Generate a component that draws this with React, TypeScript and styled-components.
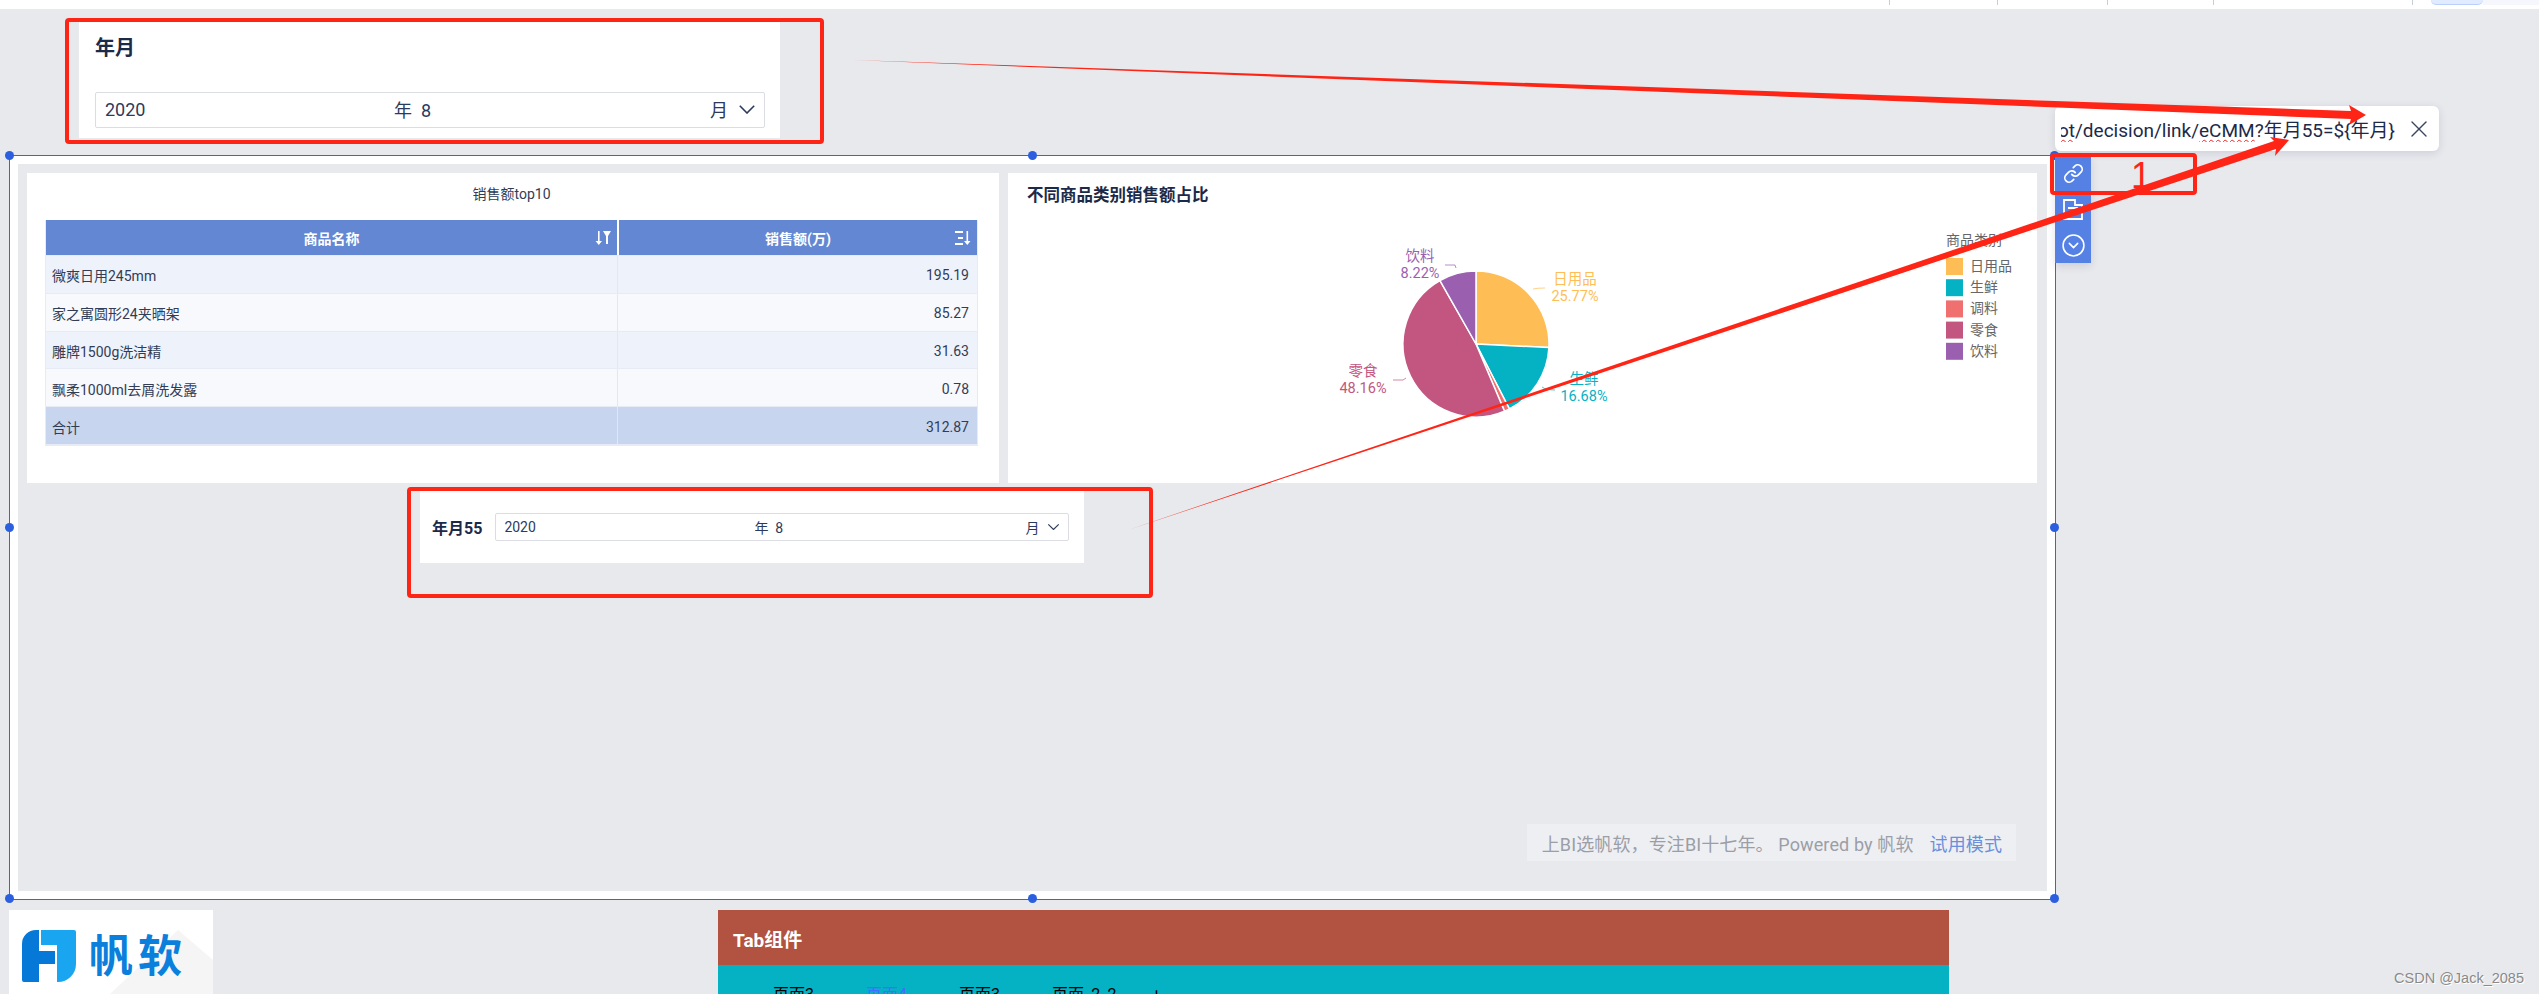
import React from 'react';
import styled, { createGlobalStyle } from 'styled-components';
import { Link, CircleChevronDown, X } from 'lucide-react';

const FONT = `Roboto, "Noto Sans CJK SC", sans-serif`;
const NAVY = '#1c2a4a';
const RED = '#ff2516';

const GlobalStyle = createGlobalStyle`
  html, body {
    margin: 0;
    padding: 0;
    background: #e8e9ed;
    font-family: ${FONT};
    overflow: hidden;
  }
  * {
    box-sizing: border-box;
  }
`;

const Page = styled.div`
  position: relative;
  width: 2539px;
  height: 994px;
  overflow: hidden;
  background: #e8e9ed;
`;

const TopBar = styled.div`
  display: flex;
  height: 9px;
  padding-left: 1889px;
  background: #fff;
`;

const Tick = styled.span<{ $w: number }>`
  width: ${p => p.$w}px;
  height: 5px;
  border-left: 1px solid #c9cdd6;
  flex: none;
`;

const TopPill = styled.span`
  width: 52px;
  height: 5px;
  margin-left: 18px;
  background: #e0ebff;
  border-bottom: 1px solid #b9d0fa;
  border-radius: 0 0 12px 12px;
`;

const TopTail = styled.span`
  flex: 1;
  height: 5px;
  background: #f5f7fd;
`;

const TopFilter = styled.div`
  width: 701px;
  height: 118px;
  margin: 11px 0 0 79px;
  padding: 13px 15px 0 16px;
  background: #fff;
`;

const FilterTitle = styled.div`
  font-size: 20px;
  font-weight: 700;
  line-height: 30px;
  color: ${NAVY};
  margin-bottom: 29px;
`;

const Select = styled.div<{ $small?: boolean }>`
  flex: 1;
  display: grid;
  grid-template-columns: ${p => (p.$small ? '250px 271px 1fr' : '289px 316px 1fr')};
  align-items: center;
  height: ${p => (p.$small ? 28 : 36)}px;
  padding: 0 8px ${p => (p.$small ? 0 : 2)}px ${p => (p.$small ? 8 : 9)}px;
  background: #fff;
  border: 1px solid #dcdde4;
  border-radius: 2px;
  font-size: ${p => (p.$small ? 14 : 18)}px;
  color: #2c3a5c;
`;

const SelectEnd = styled.span<{ $small?: boolean }>`
  display: flex;
  align-items: center;
  justify-content: flex-end;
  gap: ${p => (p.$small ? 8 : 10)}px;
`;

const Selection = styled.div`
  position: relative;
  width: 2047px;
  height: 745px;
  margin: 17px 0 0 9px;
  padding: 8px;
  background: #fff;
  border: 1px solid #3467dc;
`;

const Dot = styled.i<{ $x: number; $y: number }>`
  position: absolute;
  left: ${p => p.$x}%;
  top: ${p => p.$y}%;
  width: 9px;
  height: 9px;
  margin: -5px 0 0 -5px;
  border-radius: 50%;
  background: #2b5fe0;
`;

const Panel = styled.div`
  display: flex;
  flex-direction: column;
  height: 100%;
  padding: 9px;
  background: #e8e9ed;
`;

const Cards = styled.div`
  display: grid;
  grid-template-columns: 972px 1029px;
  gap: 9px;
  height: 310px;
`;

const Card = styled.section`
  background: #fff;
`;

const TableCard = styled(Card)`
  padding: 0 21px 0 18px;
`;

const TableTitle = styled.div`
  height: 47px;
  padding-top: 10px;
  font-size: 14px;
  line-height: 22px;
  text-align: center;
  color: #333c55;
`;

const TableGrid = styled.div`
  border: 1px solid #e6ebf5;
  border-top: none;
  font-size: 14px;
  color: #333c55;
`;

const Row = styled.div<{ $bg: string; $h: number }>`
  display: grid;
  grid-template-columns: 571px 1fr;
  height: ${p => p.$h}px;
  background: ${p => p.$bg};
  border-bottom: 1px solid #e6ebf5;
`;

const Cell = styled.div<{ $right?: boolean }>`
  display: flex;
  align-items: center;
  justify-content: ${p => (p.$right ? 'flex-end' : 'flex-start')};
  padding: 2px 8px 0 6px;
  border-left: ${p => (p.$right ? '1px solid #e2e8f3' : 'none')};
`;

const HeadCell = styled.div<{ $right?: boolean }>`
  position: relative;
  display: flex;
  align-items: center;
  justify-content: center;
  background: #6487d3;
  color: #fff;
  font-weight: 700;
  border-left: ${p => (p.$right ? '2px solid #fff' : 'none')};
`;

const HeadIcon = styled.svg`
  position: absolute;
  right: 6px;
  top: 11px;
`;

const ChartCard = styled(Card)`
  display: flex;
  flex-direction: column;
`;

const ChartTitle = styled.div`
  height: 44px;
  padding: 12px 0 0 19px;
  font-size: 16.5px;
  font-weight: 700;
  line-height: 22px;
  color: ${NAVY};
`;

const ChartSvg = styled.svg`
  display: block;
  font-family: ${FONT};
`;

const InlineFilter = styled.div`
  display: flex;
  align-items: center;
  gap: 13px;
  width: 664px;
  height: 73px;
  margin: 7px 0 0 393px;
  padding: 0 15px 0 12px;
  background: #fff;
`;

const InlineLabel = styled.span`
  flex: none;
  font-size: 16px;
  font-weight: 700;
  color: ${NAVY};
  white-space: nowrap;
`;

const Notice = styled.div`
  display: flex;
  align-items: center;
  gap: 16px;
  align-self: flex-end;
  height: 37px;
  margin: auto 22px 21px 0;
  padding: 0 14px 0 15px;
  background: #eeeff3;
  font-size: 18px;
  letter-spacing: 0.12px;
  color: #9b9ea6;
  white-space: nowrap;
`;

const NoticeLink = styled.span`
  color: #6a8fdc;
`;

const Bottom = styled.div`
  display: flex;
  margin: 10px 0 0 9px;
  height: 84px;
`;

const LogoCard = styled.div`
  position: relative;
  display: flex;
  align-items: flex-start;
  gap: 13px;
  width: 204px;
  padding: 20px 0 0 13px;
  overflow: hidden;
  background: #fff;
`;

const LogoBack = styled.svg`
  position: absolute;
  left: 0;
  top: 0;
`;

const LogoIcon = styled.svg`
  position: relative;
  flex: none;
`;

const LogoText = styled.span`
  position: relative;
  margin-top: -3px;
  font-size: 44px;
  font-weight: 700;
  line-height: 60px;
  letter-spacing: 5px;
  color: #0a7fdc;
`;

const TabWidget = styled.div`
  width: 1231px;
  margin-left: 505px;
`;

const TabHead = styled.div`
  height: 55px;
  padding: 17px 0 0 15px;
  background: #b25240;
  color: #fff;
  font-size: 19px;
  font-weight: 700;
  line-height: 28px;
`;

const TabRow = styled.div`
  display: flex;
  height: 60px;
  padding: 18px 0 0 55px;
  background: #05b2c4;
  font-size: 16px;
  line-height: 24px;
`;

const TabItem = styled.span<{ $active?: boolean; $wide?: boolean }>`
  width: ${p => (p.$wide ? 100 : 93)}px;
  color: ${p => (p.$active ? '#3f6fff' : '#000')};
`;

const Popup = styled.div`
  position: absolute;
  left: 2055px;
  top: 106px;
  display: flex;
  align-items: center;
  width: 384px;
  height: 45px;
  padding: 0 6px;
  background: #fff;
  border-radius: 6px;
  box-shadow: 0 2px 8px rgba(40, 50, 80, 0.14);
  font-size: 19px;
  color: ${NAVY};
`;

const PopupText = styled.div`
  display: flex;
  justify-content: flex-end;
  flex: none;
  width: 334px;
  margin-right: 10px;
  overflow: hidden;
  white-space: nowrap;
`;

const Squiggle = styled.span`
  text-decoration: underline wavy #e8262a 1px;
  text-underline-offset: 2px;
`;

const Toolbar = styled.div`
  position: absolute;
  left: 2055px;
  top: 156px;
  display: flex;
  flex-direction: column;
  width: 36px;
  background: #5681e4;
  box-shadow: 0 3px 8px rgba(40, 50, 80, 0.14);
  color: #fff;
`;

const ToolButton = styled.div`
  display: flex;
  align-items: center;
  justify-content: center;
  height: 35.7px;
`;

const Mark = styled.div<{ $x: number; $y: number; $w: number; $h: number }>`
  position: absolute;
  left: ${p => p.$x}px;
  top: ${p => p.$y}px;
  width: ${p => p.$w}px;
  height: ${p => p.$h}px;
  border: 4px solid ${RED};
  border-radius: 4px;
`;

const MarkNumber = styled.div`
  position: absolute;
  left: 2131px;
  top: 155px;
  font-family: "Liberation Sans", sans-serif;
  font-size: 36px;
  line-height: 42px;
  color: ${RED};
`;

const Arrows = styled.svg`
  position: absolute;
  left: 0;
  top: 0;
  pointer-events: none;
`;

const Watermark = styled.div`
  position: absolute;
  right: 15px;
  top: 968px;
  font-family: "Liberation Sans", sans-serif;
  font-size: 14.5px;
  line-height: 20px;
  color: #8a8a8a;
  text-shadow: 1px 1px 0 #fff;
`;

const rows = [
    { name: '微爽日用245mm', value: '195.19', bg: '#edf2fb' },
    { name: '家之寓圆形24夹晒架', value: '85.27', bg: '#f7f9fd' },
    { name: '雕牌1500g洗洁精', value: '31.63', bg: '#edf2fb' },
    { name: '飘柔1000ml去屑洗发露', value: '0.78', bg: '#f7f9fd' },
    { name: '合计', value: '312.87', bg: '#c7d5ee' },
];

const slices = [
    { name: '日用品', share: 25.77, color: '#ffbe55' },
    { name: '生鲜', share: 16.68, color: '#05b2c4' },
    { name: '调料', share: 1.17, color: '#f07070' },
    { name: '零食', share: 48.16, color: '#c25680' },
    { name: '饮料', share: 8.22, color: '#9b5fb0' },
];

const pieLabels = [
    { name: '日用品', share: '25.77%', x: 1575, y: 284, color: '#ffbe55', line: 'M1533 289Q1537 288 1545 288' },
    { name: '生鲜', share: '16.68%', x: 1584, y: 384, color: '#05b2c4', line: 'M1542 387Q1546 390 1555 390' },
    { name: '零食', share: '48.16%', x: 1363, y: 376, color: '#c25680', line: 'M1393 380L1403 380L1406 378' },
    { name: '饮料', share: '8.22%', x: 1420, y: 261, color: '#9b5fb0', line: 'M1445 265L1455 265L1456 268' },
];

const CX = 1476;
const CY = 344;
const R = 73;

const slicePath = (from: number, to: number) => {
    const a = (from / 100) * Math.PI * 2;
    const b = (to / 100) * Math.PI * 2;
    const large = to - from > 50 ? 1 : 0;
    const x1 = CX + R * Math.sin(a);
    const y1 = CY - R * Math.cos(a);
    const x2 = CX + R * Math.sin(b);
    const y2 = CY - R * Math.cos(b);
    return `M${CX} ${CY}L${x1} ${y1}A${R} ${R} 0 ${large} 1 ${x2} ${y2}Z`;
};

const Chevron = ({ size }: { size: number }) => (
    <svg width={size} height={size * 0.6} viewBox="0 0 20 12" fill="none" stroke="#2c3a5c" strokeWidth="1.8">
        <path d="M2 2l8 8 8-8" />
    </svg>
);

const Pie = () => {
    let start = 0;
    return (
        <>
            {slices.map(s => {
                const d = slicePath(start, start + s.share);
                start += s.share;
                return <path key={s.name} d={d} fill={s.color} stroke="#fff" strokeWidth="1.5" />;
            })}
        </>
    );
};

const App = () => (
    <Page>
        <GlobalStyle />
        <TopBar>
            <Tick $w={108} />
            <Tick $w={110} />
            <Tick $w={106} />
            <Tick $w={199} />
            <Tick $w={0} />
            <TopPill />
            <TopTail />
        </TopBar>

        <TopFilter>
            <FilterTitle>年月</FilterTitle>
            <Select>
                <span>2020</span>
                <span>年&nbsp; 8</span>
                <SelectEnd>月<Chevron size={18} /></SelectEnd>
            </Select>
        </TopFilter>

        <Selection>
            <Panel>
                <Cards>
                    <TableCard>
                        <TableTitle>销售额top10</TableTitle>
                        <TableGrid>
                            <Row $bg="#6487d3" $h={36}>
                                <HeadCell>
                                    商品名称
                                    <HeadIcon width="16" height="14" viewBox="0 0 16 14" fill="#fff">
                                        <path d="M3 0h1.6v10H7l-3.2 4-3.2-4H3zM8 0h8l-3 5v8h-2V5z" />
                                    </HeadIcon>
                                </HeadCell>
                                <HeadCell $right>
                                    销售额(万)
                                    <HeadIcon width="16" height="14" viewBox="0 0 16 14" fill="#fff">
                                        <path d="M0 0h8v2H0zM3 6h5v2H3zM0 12h8v2H0zM11.500 0h1.600v10h2.400L12.300 14 9 10h2.500z" />
                                    </HeadIcon>
                                </HeadCell>
                            </Row>
                            {rows.map(r => (
                                <Row key={r.name} $bg={r.bg} $h={37.8}>
                                    <Cell>{r.name}</Cell>
                                    <Cell $right>{r.value}</Cell>
                                </Row>
                            ))}
                        </TableGrid>
                    </TableCard>

                    <ChartCard>
                        <ChartTitle>不同商品类别销售额占比</ChartTitle>
                        <ChartSvg width="1029" height="266" viewBox="1008 217 1029 266">
                            <Pie />
                            {pieLabels.map(l => (
                                <g key={l.name} fill={l.color} fontSize="14.5" textAnchor="middle">
                                    <path d={l.line} fill="none" stroke={l.color} strokeOpacity="0.7" />
                                    <text x={l.x} y={l.y}>{l.name}</text>
                                    <text x={l.x} y={l.y + 17}>{l.share}</text>
                                </g>
                            ))}
                            <text x="1946" y="245" fontSize="14" fill="#666">商品类别</text>
                            {slices.map((s, i) => (
                                <g key={s.name}>
                                    <rect x="1946" y={258 + i * 21.2} width="17" height="17" fill={s.color} />
                                    <text x="1970" y={271 + i * 21.2} fontSize="14" fill="#666">{s.name}</text>
                                </g>
                            ))}
                        </ChartSvg>
                    </ChartCard>
                </Cards>

                <InlineFilter>
                    <InlineLabel>年月55</InlineLabel>
                    <Select $small>
                        <span>2020</span>
                        <span>年&nbsp; 8</span>
                        <SelectEnd $small>月<Chevron size={13} /></SelectEnd>
                    </Select>
                </InlineFilter>

                <Notice>
                    <span>上BI选帆软，专注BI十七年。 Powered by 帆软</span>
                    <NoticeLink>试用模式</NoticeLink>
                </Notice>
            </Panel>
            <Dot $x={0} $y={0} />
            <Dot $x={50} $y={0} />
            <Dot $x={100} $y={0} />
            <Dot $x={0} $y={50} />
            <Dot $x={100} $y={50} />
            <Dot $x={0} $y={100} />
            <Dot $x={50} $y={100} />
            <Dot $x={100} $y={100} />
        </Selection>

        <Bottom>
            <LogoCard>
                <LogoBack width="204" height="84" viewBox="0 0 204 84">
                    <path d="M101 84L169 20l35 30v34z" fill="#f5f5f6" />
                </LogoBack>
                <LogoIcon width="54" height="52" viewBox="0 0 54 52">
                    <path d="M14 0h3v21h16v13H17v18H2a2 2 0 0 1-2-2V14A14 14 0 0 1 14 0z" fill="#0678d8" />
                    <path d="M19 0h33a2 2 0 0 1 2 2v32a18 18 0 0 1-18 18h-1V15H19z" fill="#1aa5f0" />
                </LogoIcon>
                <LogoText>帆软</LogoText>
            </LogoCard>
            <TabWidget>
                <TabHead>Tab组件</TabHead>
                <TabRow>
                    <TabItem>页面3</TabItem>
                    <TabItem $active>页面4</TabItem>
                    <TabItem>页面3</TabItem>
                    <TabItem $wide>页面_2_2</TabItem>
                    <TabItem>+</TabItem>
                </TabRow>
            </TabWidget>
        </Bottom>

        <Toolbar>
            <ToolButton><Link size={21} strokeWidth={2} /></ToolButton>
            <ToolButton>
                <svg width="20" height="21" viewBox="0 0 20 21" fill="none" stroke="#fff" strokeWidth="1.8">
                    <path d="M1 1h11v5h7v14H1z" />
                    <path d="M5 9h10M5 13h2M9 13h2M13 13h2" strokeWidth="2.2" />
                </svg>
            </ToolButton>
            <ToolButton><CircleChevronDown size={25} strokeWidth={1.5} /></ToolButton>
        </Toolbar>

        <Popup>
            <PopupText>
                <span>
                    <Squiggle>ot</Squiggle>/decision/link/<Squiggle>eCMM</Squiggle>?年月55=${'{'}年月{'}'}
                </span>
            </PopupText>
            <X size={28} strokeWidth={1.2} color="#3a4660" />
        </Popup>

        <Mark $x={65} $y={18} $w={759} $h={126} />
        <Mark $x={407} $y={487} $w={746} $h={111} />
        <Mark $x={2050} $y={153} $w={147} $h={42} />
        <MarkNumber>1</MarkNumber>

        <Arrows width="2539" height="994" viewBox="0 0 2539 994">
            <path d="M853 60L2351 111L2349 105L2366 115L2349 125L2351 119Z" fill={RED} />
            <path d="M1128 530L2274 141L2270 137L2289 140L2275 156L2276 149Z" fill={RED} />
        </Arrows>

        <Watermark>CSDN @Jack_2085</Watermark>
    </Page>
);

export default App;
